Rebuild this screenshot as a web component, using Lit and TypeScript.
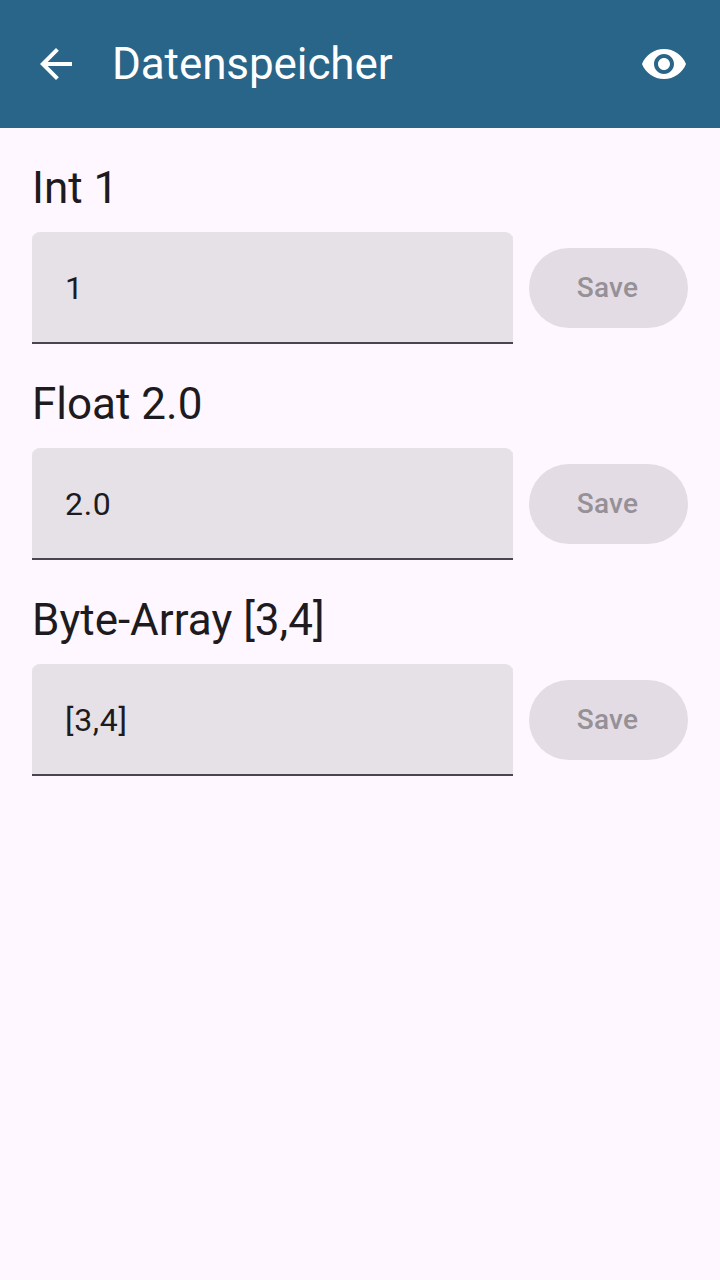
import { LitElement, html, css } from "lit";
import { customElement, property } from "lit/decorators.js";

@customElement("storage-field")
class StorageField extends LitElement {
  @property() label = "";
  @property() value = "";

  static styles = css`
    :host { display: block; height: 216px; }
    .label { height: 56px; line-height: 56px; font-size: 44px; color: #1d1b20; white-space: nowrap; padding-top: 16px; padding-bottom: 16px; }
    .row { display: flex; align-items: center; gap: 16px; }
    .field { box-sizing: border-box; flex: 1; height: 112px; padding: 0 33px; line-height: 112px; font-size: 32px; letter-spacing: 0.7px; color: #1d1b20; background: #e6e1e7; border-radius: 8px 8px 0 0; box-shadow: inset 0 -2px #49454f; }
    .save { width: 159px; height: 80px; padding: 0 2px 0 0; border: 0; border-radius: 40px; background: #e4dce4; color: #969097; font: 500 28px/80px Roboto, sans-serif; letter-spacing: 0.2px; text-align: center; }
  `;

  render() {
    return html`
      <div class="label">${this.label}</div>
      <div class="row">
        <div class="field">${this.value}</div>
        <button class="save" disabled>Save</button>
      </div>
    `;
  }
}

@customElement("app-root")
class AppRoot extends LitElement {
  static styles = css`
    :host { display: block; min-height: 1280px; background: #fef7ff; font-family: Roboto, sans-serif; }
    .bar { box-sizing: border-box; display: flex; align-items: center; height: 128px; padding: 0 32px; background: #296588; color: #fff; }
    .title { flex: 1; margin-left: 32px; font-size: 44px; line-height: 56px; font-weight: 400; letter-spacing: -0.1px; }
    svg { display: block; width: 48px; height: 48px; fill: currentColor; }
    .list { padding: 16px 32px; }
  `;

  render() {
    return html`
      <header class="bar">
        <svg viewBox="0 0 24 24"><path d="M20 11H7.83l5.59-5.59L12 4l-8 8 8 8 1.41-1.41L7.83 13H20v-2z" /></svg>
        <div class="title">Datenspeicher</div>
        <svg viewBox="0 0 24 24"><path d="M12 4.5C7 4.5 2.73 7.61 1 12c1.73 4.39 6 7.5 11 7.5s9.27-3.11 11-7.5c-1.73-4.39-6-7.5-11-7.5zM12 17c-2.76 0-5-2.24-5-5s2.24-5 5-5 5 2.24 5 5-2.24 5-5 5zm0-8c-1.66 0-3 1.34-3 3s1.34 3 3 3 3-1.34 3-3-1.34-3-3-3z" /></svg>
      </header>
      <main class="list">
        <storage-field label="Int 1" value="1"></storage-field>
        <storage-field label="Float 2.0" value="2.0"></storage-field>
        <storage-field label="Byte-Array [3,4]" value="[3,4]"></storage-field>
      </main>
    `;
  }
}
